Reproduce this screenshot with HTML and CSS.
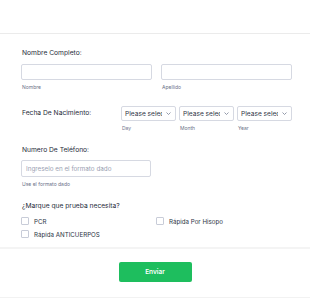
FILE: index.html
```html
<!DOCTYPE html>
<html lang="es">
<head>
    <meta charset="UTF-8">
    <meta name="viewport" content="width=device-width, initial-scale=1.0">
    <title>Formulario</title>
    <link rel="stylesheet" href="styles.css">
</head>
<body>
    <div class="header"></div>

    <form class="form">
        <div class="field field-name">
            <label class="label">Nombre Completo:</label>
            <div class="name-row">
                <div class="sub-field">
                    <input class="input" type="text">
                    <span class="sublabel">Nombre</span>
                </div>
                <div class="sub-field">
                    <input class="input" type="text">
                    <span class="sublabel">Apellido</span>
                </div>
            </div>
        </div>

        <div class="field field-inline">
            <label class="label label-side">Fecha De Nacimiento:</label>
            <div class="date-row">
                <div class="sub-field">
                    <div class="select-wrap">
                        <select class="select"><option>Please select</option></select>
                        <svg class="chevron" width="5" height="3" viewBox="0 0 5 3"><path d="M0.5 0.5 L2.5 2.5 L4.5 0.5" fill="none" stroke="#7a8196" stroke-width="0.8"/></svg>
                    </div>
                    <span class="sublabel">Day</span>
                </div>
                <div class="sub-field">
                    <div class="select-wrap">
                        <select class="select"><option>Please select</option></select>
                        <svg class="chevron" width="5" height="3" viewBox="0 0 5 3"><path d="M0.5 0.5 L2.5 2.5 L4.5 0.5" fill="none" stroke="#7a8196" stroke-width="0.8"/></svg>
                    </div>
                    <span class="sublabel">Month</span>
                </div>
                <div class="sub-field">
                    <div class="select-wrap">
                        <select class="select"><option>Please select</option></select>
                        <svg class="chevron" width="5" height="3" viewBox="0 0 5 3"><path d="M0.5 0.5 L2.5 2.5 L4.5 0.5" fill="none" stroke="#7a8196" stroke-width="0.8"/></svg>
                    </div>
                    <span class="sublabel">Year</span>
                </div>
            </div>
        </div>

        <div class="field field-phone">
            <label class="label">Numero De Teléfono:</label>
            <div class="sub-field phone">
                <input class="input" type="text" placeholder="Ingreselo en el formato dado">
                <span class="sublabel">Use el formato dado</span>
            </div>
        </div>

        <div class="field field-checks">
            <label class="label">¿Marque que prueba necesita?</label>
            <div class="checks">
                <label class="check"><input type="checkbox"><span>PCR</span></label>
                <label class="check"><input type="checkbox"><span>Rápida Por Hisopo</span></label>
                <label class="check"><input type="checkbox"><span>Rápida ANTICUERPOS</span></label>
            </div>
        </div>
    </form>

    <div class="footer">
        <button class="submit" type="button">Enviar</button>
    </div>
</body>
</html>
```

FILE: styles.css
```css
body {
    margin: 0;
    background-color: #ffffff;
    font-family: 'Inter', 'Noto Sans', sans-serif;
    color: #2c3345;
}

.header {
    height: 33px;
    border-bottom: 1px solid #ebebeb;
}

.form {
    padding: 14px 18px 9px 21px;
}

.field-name {
    margin-bottom: 15px;
}

.field-inline {
    margin-bottom: 13px;
}

.field-phone {
    margin-bottom: 13px;
}

.label {
    display: block;
    font-size: 6.7px;
    font-weight: 400;
    line-height: 10px;
    margin: 0 0 6px 1px;
    color: #262b3a;
}

.field-phone .label {
    margin-bottom: 5px;
}

.field-checks .label {
    margin-bottom: 6px;
}

.name-row {
    display: grid;
    grid-template-columns: 131px 131px;
    gap: 9px;
}

.sub-field {
    display: flex;
    flex-direction: column;
}

.input {
    box-sizing: border-box;
    width: 100%;
    height: 16px;
    margin: 0;
    border: 1px solid #d6d9e2;
    border-radius: 2px;
    padding: 0 4px;
    font-family: inherit;
    font-size: 6.3px;
    color: #2c3345;
    outline: none;
}

.input::placeholder {
    color: #9aa0b2;
}

.sublabel {
    font-size: 5px;
    line-height: 7px;
    color: #6b7289;
    margin-top: 4px;
    padding-left: 1px;
}

.field-inline {
    display: flex;
    align-items: flex-start;
}

.label-side {
    width: 99px;
    margin: 2px 0 0 1px;
}

.date-row {
    display: grid;
    grid-template-columns: 55px 55px 55px;
    gap: 3px;
}

.select-wrap {
    position: relative;
    display: flex;
}

.select {
    -webkit-appearance: none;
    appearance: none;
    display: block;
    box-sizing: border-box;
    width: 100%;
    height: 15px;
    margin: 0;
    border: 1px solid #d6d9e2;
    border-radius: 2px;
    padding: 0 13px 0 3px;
    background-color: #ffffff;
    font-family: inherit;
    font-size: 6.6px;
    color: #2c3345;
    outline: none;
}

.chevron {
    position: absolute;
    right: 5px;
    top: 6px;
}

.phone {
    width: 130px;
}

.phone .input {
    height: 17px;
}

.checks {
    display: grid;
    grid-template-columns: 135px 135px;
    row-gap: 5px;
    margin-top: 1px;
}

.check {
    display: flex;
    align-items: center;
    gap: 5px;
    font-size: 6.2px;
    color: #2c3345;
}

.check input {
    -webkit-appearance: none;
    appearance: none;
    box-sizing: border-box;
    width: 8px;
    height: 8px;
    margin: 0;
    border: 1px solid #c8ccd8;
    border-radius: 1px;
    background-color: #ffffff;
}

.footer {
    border-top: 2px solid #f4f4f4;
    border-bottom: 1px solid #f2f2f2;
    padding: 13px 0 15px;
    display: flex;
    justify-content: center;
}

.submit {
    width: 73px;
    height: 20px;
    border: none;
    border-radius: 2px;
    background-color: #1ebe5e;
    color: #ffffff;
    font-family: inherit;
    font-size: 6.5px;
    font-weight: 600;
    cursor: pointer;
}
```
